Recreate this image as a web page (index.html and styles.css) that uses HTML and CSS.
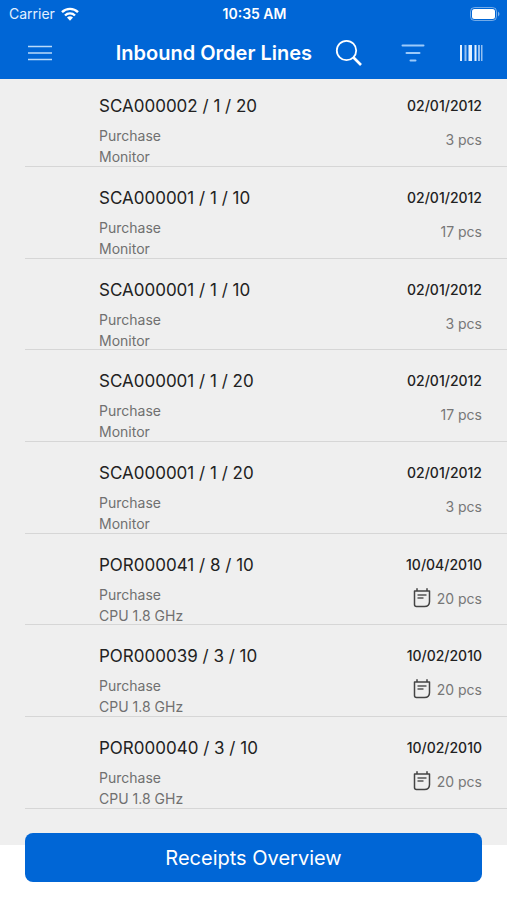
FILE: index.html
```html
<!DOCTYPE html>
<html lang="en">
<head>
<meta charset="utf-8">
<meta name="viewport" content="width=device-width, initial-scale=1">
<title>Inbound Order Lines</title>
<link rel="stylesheet" href="styles.css">
</head>
<body>
<svg class="sprite" aria-hidden="true">
  <symbol id="note" viewBox="0 0 18 20">
    <path d="M1.5 3h15v10.5q0 5-5 5h-8q-2 0-2-2z M4 .8V3 M14 .8V3" fill="none" stroke="#444" stroke-width="1.5" stroke-linejoin="round" stroke-linecap="round"/>
    <path d="M4.5 7h9M4.5 10h6" fill="none" stroke="#555" stroke-width="1.3"/>
  </symbol>
</svg>
<div class="app">
  <header class="top">
    <div class="status">
      <span class="carrier">Carrier
        <svg class="wifi" viewBox="0 0 18 14" aria-hidden="true"><g fill="none" stroke="#fff" stroke-width="2.4"><path d="M1 5.2a11.3 11.3 0 0 1 16 0"/><path d="M4 8.5a7 7 0 0 1 10 0"/></g><path d="M6 10.6a4.3 4.3 0 0 1 6 0L9 13.7z" fill="#fff"/></svg>
      </span>
      <span class="clock">10:35 AM</span>
      <svg class="battery" viewBox="0 0 30 14" aria-hidden="true"><rect x=".5" y=".5" width="26" height="13" rx="4" fill="none" stroke="#fff" stroke-opacity=".45"/><rect x="2" y="2" width="23" height="10" rx="2.5" fill="#fff"/><path d="M28 4.5q3 2.5 0 5z" fill="#fff" fill-opacity=".5"/></svg>
    </div>
    <nav class="bar">
      <button class="icon" aria-label="Menu"><svg width="24" height="16" viewBox="0 0 24 16"><path d="M0 1.5h24M0 8h24M0 14.5h24" stroke="#b9dafa" stroke-width="1.5"/></svg></button>
      <h1>Inbound Order Lines</h1>
      <button class="icon search" aria-label="Search"><svg width="28" height="28" viewBox="0 0 28 28"><g fill="none" stroke="#fff"><circle cx="11.5" cy="11.5" r="9.7" stroke-width="1.8"/><path d="M18.5 18.5l7.5 7.5" stroke-width="2.6"/></g></svg></button>
      <button class="icon filter" aria-label="Filter"><svg width="24" height="18" viewBox="0 0 24 18"><g stroke="#9ccafa" stroke-width="2" stroke-linecap="round"><path d="M1.5 1.5h21M5.5 9h13M9.500 16.500h5"/></g></svg></button>
      <button class="icon scan" aria-label="Scan barcode"><svg width="24" height="16" viewBox="0 0 24 16"><g fill="#e3f1ff"><path d="M1 0h2v16H1zM9.500 0h3.500v16H9.500zM15.500 0h2v16h-2z"/><path d="M5.500 0h2v16h-2zM19 0h2v16h-2zM22 0h1.500v16H22z" opacity=".65"/></g></svg></button>
    </nav>
  </header>
  <main class="lines">
    <ul>
      <li><h2>SCA000002 / 1 / 20</h2><p>Purchase</p><p>Monitor</p><time>02/01/2012</time><span class="qty">3 pcs</span></li>
      <li><h2>SCA000001 / 1 / 10</h2><p>Purchase</p><p>Monitor</p><time>02/01/2012</time><span class="qty">17 pcs</span></li>
      <li><h2>SCA000001 / 1 / 10</h2><p>Purchase</p><p>Monitor</p><time>02/01/2012</time><span class="qty">3 pcs</span></li>
      <li><h2>SCA000001 / 1 / 20</h2><p>Purchase</p><p>Monitor</p><time>02/01/2012</time><span class="qty">17 pcs</span></li>
      <li><h2>SCA000001 / 1 / 20</h2><p>Purchase</p><p>Monitor</p><time>02/01/2012</time><span class="qty">3 pcs</span></li>
      <li><h2>POR000041 / 8 / 10</h2><p>Purchase</p><p>CPU 1.8 GHz</p><time>10/04/2010</time><span class="qty"><svg class="note"><use href="#note"/></svg>20 pcs</span></li>
      <li><h2>POR000039 / 3 / 10</h2><p>Purchase</p><p>CPU 1.8 GHz</p><time>10/02/2010</time><span class="qty"><svg class="note"><use href="#note"/></svg>20 pcs</span></li>
      <li><h2>POR000040 / 3 / 10</h2><p>Purchase</p><p>CPU 1.8 GHz</p><time>10/02/2010</time><span class="qty"><svg class="note"><use href="#note"/></svg>20 pcs</span></li>
      <li><h2>POR000038 / 3 / 10</h2></li>
    </ul>
  </main>
  <footer class="actions"><button class="primary">Receipts Overview</button></footer>
</div>
</body>
</html>
```
FILE: styles.css
```css
* { box-sizing: border-box; }

body {
  margin: 0;
  background: #fff;
  color: #222;
  font-family: Inter, "Liberation Sans", sans-serif;
}

h1, h2, p, ul { margin: 0; padding: 0; }

button {
  border: 0;
  padding: 0;
  background: none;
  color: #fff;
  font: inherit;
}

.sprite { display: none; }

.app {
  display: flex;
  flex-direction: column;
  height: 100vh;
}

.top {
  flex: none;
  background: #0066d6;
  color: #fff;
}

.status {
  display: grid;
  grid-template-columns: 1fr auto 1fr;
  align-items: center;
  height: 27px;
  padding: 0 7px 0 9px;
  font-size: 14px;
}

.carrier {
  display: flex;
  align-items: center;
  gap: 6px;
  color: #e3f0ff;
}

.wifi { width: 18px; height: 14px; }

.clock { font-weight: 600; }

.battery {
  width: 30px;
  height: 14px;
  justify-self: end;
}

.bar {
  display: flex;
  align-items: center;
  height: 52px;
  padding: 0 24px 0 28px;
}

.bar h1 {
  flex: 1;
  padding-right: 23px;
  font-size: 20px;
  line-height: 24px;
  font-weight: 600;
  text-align: right;
  white-space: nowrap;
}

.icon { display: flex; flex: none; }
.search { margin-right: 38px; }
.filter { margin-right: 34px; }

.lines {
  flex: 1;
  min-height: 0;
  overflow: hidden;
  background: #efefef;
}

/* The list rests slightly scrolled beneath the header. */
.lines ul {
  margin-top: -4px;
  list-style: none;
}

.lines li {
  display: grid;
  grid-template-columns: 1fr auto;
  grid-template-rows: 31px 21px 21px;
  height: 92px;
  margin-left: 25px;
  padding: 19px 25px 0 74px;
  border-bottom: 1px solid #d6d6d6;
}

.lines li:nth-child(3n) { height: 91px; }

.lines h2 {
  font-size: 17px;
  line-height: 24px;
  font-weight: 400;
}

.lines p {
  grid-column: 1;
  color: #707070;
  font-size: 14px;
  line-height: 21px;
}

.lines time {
  grid-column: 2;
  grid-row: 1;
  font-size: 14px;
  line-height: 24px;
  font-weight: 500;
  text-align: right;
}

.qty {
  display: flex;
  grid-column: 2;
  grid-row: 2 / 4;
  align-items: center;
  justify-content: flex-end;
  gap: 6px;
  height: 28px;
  color: #777;
  font-size: 14px;
}

.note { width: 18px; height: 20px; }

.actions {
  position: relative;
  flex: none;
  margin-top: -12px;
  padding: 0 25px 18px;
}

.primary {
  display: block;
  width: 100%;
  height: 49px;
  border-radius: 8px;
  background: #0066d6;
  font-size: 20px;
}
```
